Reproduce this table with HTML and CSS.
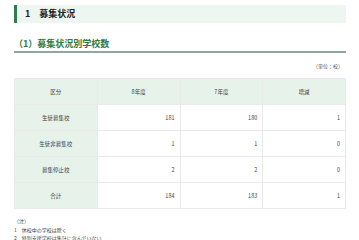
FILE: index.html
```html
<!DOCTYPE html>
<html lang="ja">
<head>
<meta charset="utf-8">
<link rel="stylesheet" href="styles.css">
</head>
<body>
<div class="page">
  <h2 class="sec-title">1　募集状況</h2>
  <h3 class="sub-title">（1）募集状況別学校数</h3>
  <p class="unit">（単位：校）</p>
  <table class="data">
    <thead>
      <tr><th>区分</th><th>8年度</th><th>7年度</th><th>増減</th></tr>
    </thead>
    <tbody>
      <tr><th>生徒募集校</th><td>181</td><td>180</td><td>1</td></tr>
      <tr><th>生徒非募集校</th><td>1</td><td>1</td><td>0</td></tr>
      <tr><th>募集停止校</th><td>2</td><td>2</td><td>0</td></tr>
      <tr><th>合計</th><td>184</td><td>183</td><td>1</td></tr>
    </tbody>
  </table>
  <div class="notes">
    <p>（注）</p>
    <p>1　休校中の学校は除く</p>
    <p>2　特別支援学校は集計に含んでいない</p>
  </div>
</div>
</body>
</html>
```
FILE: styles.css
```css
html, body {
  margin: 0;
  padding: 0;
  background: #ffffff;
}
body {
  font-family: "Noto Sans CJK JP", "Noto Sans", sans-serif;
  color: #333333;
}
.page {
  padding: 5px 13px 0 14px;
}
.sec-title {
  margin: 0;
  height: 18px;
  line-height: 18px;
  background: #eef6f1;
  border-left: 3px solid #2f7d4a;
  padding-left: 8px;
  font-size: 9px;
  font-weight: 700;
  color: #222222;
}
.sub-title {
  margin: 13px 0 0 0;
  line-height: 15px;
  font-size: 9px;
  font-weight: 700;
  color: #2e7b46;
  border-bottom: 2px solid #8fa89a;
}
.unit {
  margin: 9px 3px 0 0;
  text-align: right;
  font-size: 5px;
  line-height: 8px;
  color: #555555;
}
.data {
  margin-top: 8px;
  width: 100%;
  border-collapse: collapse;
  table-layout: fixed;
  font-size: 5.5px;
}
.data th, .data td {
  height: 26px;
  padding: 0 5px;
  border: 1px solid #e8ebe9;
  box-sizing: border-box;
  font-weight: 400;
  color: #444444;
}
.data th {
  background: #e7f2eb;
  text-align: center;
}
.data td {
  text-align: right;
  background: #ffffff;
}
.notes {
  margin-top: 8px;
  font-size: 5px;
  line-height: 8.5px;
  color: #444444;
}
.notes p {
  margin: 0;
}
```
